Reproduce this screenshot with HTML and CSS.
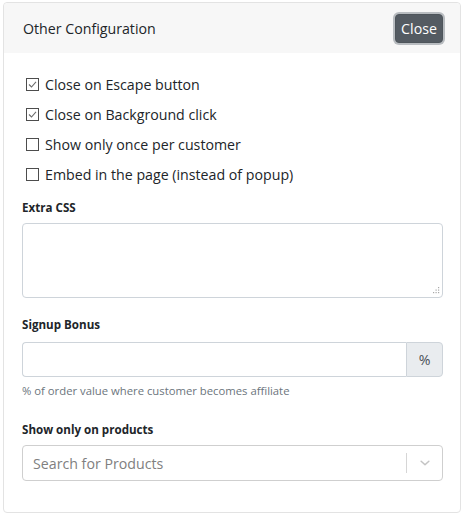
FILE: index.html
```html
<!DOCTYPE html>
<html>
<head>
<meta charset="utf-8">
<link rel="stylesheet" href="styles.css">
</head>
<body>
<div class="card">
  <div class="card-header">
    <span class="title">Other Configuration</span>
    <button class="btn-close">Close</button>
  </div>
  <div class="card-body">
    <label class="check"><span class="box"><svg width="11" height="11" viewBox="0 0 11 11"><path d="M2 5.5 L4.5 8 L9 2.8" fill="none" stroke="#6d6d6d" stroke-width="1.1"/></svg></span><span>Close on Escape button</span></label>
    <label class="check"><span class="box"><svg width="11" height="11" viewBox="0 0 11 11"><path d="M2 5.5 L4.5 8 L9 2.8" fill="none" stroke="#6d6d6d" stroke-width="1.1"/></svg></span><span>Close on Background click</span></label>
    <label class="check"><span class="box"></span><span>Show only once per customer</span></label>
    <label class="check"><span class="box"></span><span>Embed in the page (instead of popup)</span></label>

    <div class="group g-css">
      <div class="label">Extra CSS</div>
      <div class="area-wrap">
        <textarea class="area"></textarea>
        <svg class="grip" width="9" height="9" viewBox="0 0 9 9" fill="#a8a8a8"><rect x="7" y="1" width="1.2" height="1.2"/><rect x="4.5" y="3.5" width="1.2" height="1.2"/><rect x="7" y="3.5" width="1.2" height="1.2"/><rect x="2" y="6" width="1.2" height="1.2"/><rect x="4.5" y="6" width="1.2" height="1.2"/><rect x="7" y="6" width="1.2" height="1.2"/></svg>
      </div>
    </div>

    <div class="group g-bonus">
      <div class="label label-bonus">Signup Bonus</div>
      <div class="input-group">
        <input class="field" type="text">
        <span class="addon">%</span>
      </div>
      <div class="help">% of order value where customer becomes affiliate</div>
    </div>

    <div class="group g-prod">
      <div class="label">Show only on products</div>
      <div class="select">
        <span class="placeholder">Search for Products</span>
        <span class="sep"></span>
        <span class="chev"><svg width="14" height="14" viewBox="0 0 20 20"><path d="M4.5 7.5 L10 12.5 L15.5 7.5" fill="none" stroke="#c4c4c4" stroke-width="2.2" stroke-linecap="round" stroke-linejoin="round"/></svg></span>
      </div>
    </div>
  </div>
</div>
</body>
</html>
```

FILE: styles.css
```css
* { box-sizing: border-box; }
html, body { margin: 0; padding: 0; background: #fff; }
body {
  font-family: "Open Sans", "Noto Sans", sans-serif;
  color: #212529;
  font-size: 14px;
}
.card {
  margin: 2px 2px 3px 3px;
  border: 1px solid #e3e3e3;
  border-radius: 4px;
  height: 511px;
  display: flex;
  flex-direction: column;
}
.card-header {
  background: #f7f7f7;
  height: 50px;
  display: flex;
  align-items: center;
  justify-content: space-between;
  padding: 0 17px 0 19px;
  border-radius: 4px 4px 0 0;
}
.title { font-size: 14.2px; }
.btn-close {
  font-family: inherit;
  font-size: 14.2px;
  color: #fff;
  background: #545b62;
  border: 1px solid #4e555b;
  border-radius: 4px;
  height: 29px;
  width: 48px;
  padding: 0;
  box-shadow: 0 0 0 2px #b8bcc0;
}
.card-body {
  padding: 16px 17px 0 18px;
  display: flex;
  flex-direction: column;
}
.check {
  display: flex;
  align-items: center;
  height: 30px;
  font-size: 14.2px;
}
.box {
  width: 13px;
  height: 13px;
  margin: 0 6px 0 4px;
  border: 1px solid #4d4d4d;
  background: #fff;
  display: flex;
  align-items: center;
  justify-content: center;
  flex: none;
}
.group { display: flex; flex-direction: column; }
.g-css { margin-top: 11px; }
.g-bonus { margin-top: 19px; }
.g-prod { margin-top: 24px; }
.label {
  font-weight: 700;
  font-size: 11.6px;
  margin-bottom: 8px;
}
.label-bonus { margin-bottom: 10px; }
.area-wrap { position: relative; }
.area {
  display: block;
  width: 100%;
  height: 75px;
  border: 1px solid #ced4da;
  border-radius: 4px;
  resize: none;
  font-family: inherit;
}
.grip {
  position: absolute;
  right: 3px;
  bottom: 3px;
}
.input-group {
  display: flex;
  height: 35px;
}
.field {
  flex: 1;
  border: 1px solid #ced4da;
  border-right: none;
  border-radius: 4px 0 0 4px;
  font-family: inherit;
}
.addon {
  width: 37px;
  background: #e9ecef;
  border: 1px solid #ced4da;
  border-radius: 0 4px 4px 0;
  display: flex;
  align-items: center;
  justify-content: center;
  font-size: 14.2px;
  color: #495057;
}
.help {
  margin-top: 6px;
  font-size: 11.3px;
  color: #6c757d;
}
.select {
  display: flex;
  align-items: center;
  height: 36px;
  border: 1px solid #cfcfcf;
  border-radius: 4px;
}
.placeholder {
  flex: 1;
  padding-left: 10px;
  color: #808080;
  font-size: 14.2px;
}
.sep {
  width: 1px;
  height: 20px;
  background: #d6d6d6;
}
.chev {
  width: 35px;
  display: flex;
  justify-content: center;
  align-items: center;
}
```
